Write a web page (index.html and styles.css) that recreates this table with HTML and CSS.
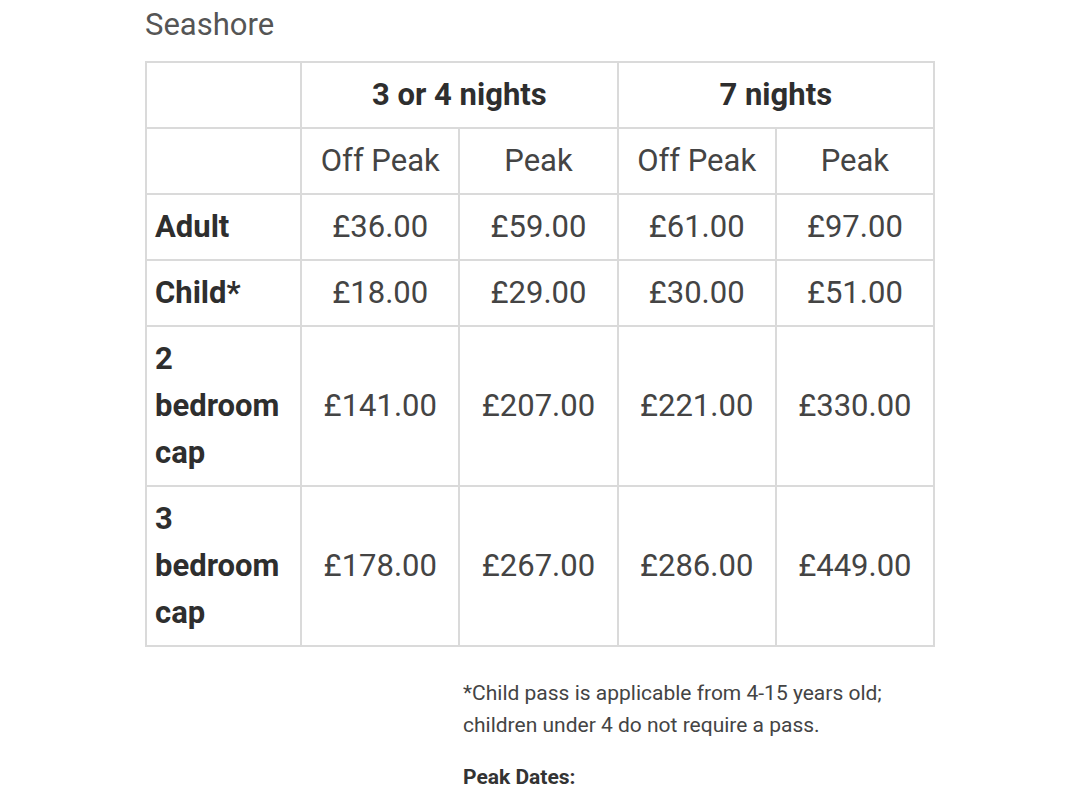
FILE: index.html
```html
<!DOCTYPE html>
<html lang="en">
<head>
<meta charset="utf-8">
<title>Seashore prices</title>
<link rel="stylesheet" href="styles.css">
</head>
<body>
<main class="page">
  <p class="title">Seashore</p>
  <table class="prices">
    <colgroup>
      <col class="col-label">
      <col class="col-val">
      <col class="col-val">
      <col class="col-val">
      <col class="col-val">
    </colgroup>
    <tr>
      <td></td>
      <th colspan="2">3 or 4 nights</th>
      <th colspan="2">7 nights</th>
    </tr>
    <tr>
      <td></td>
      <td>Off Peak</td>
      <td>Peak</td>
      <td>Off Peak</td>
      <td>Peak</td>
    </tr>
    <tr>
      <th class="label">Adult</th>
      <td>£36.00</td>
      <td>£59.00</td>
      <td>£61.00</td>
      <td>£97.00</td>
    </tr>
    <tr>
      <th class="label">Child*</th>
      <td>£18.00</td>
      <td>£29.00</td>
      <td>£30.00</td>
      <td>£51.00</td>
    </tr>
    <tr>
      <th class="label">2 bedroom cap</th>
      <td>£141.00</td>
      <td>£207.00</td>
      <td>£221.00</td>
      <td>£330.00</td>
    </tr>
    <tr>
      <th class="label">3 bedroom cap</th>
      <td>£178.00</td>
      <td>£267.00</td>
      <td>£286.00</td>
      <td>£449.00</td>
    </tr>
  </table>
  <div class="notes">
    <p class="note">*Child pass is applicable from 4-15 years old;<br>children under 4 do not require a pass.</p>
    <p class="note strong">Peak Dates:</p>
  </div>
</main>
</body>
</html>
```
FILE: styles.css
```css
html, body {
  margin: 0;
  padding: 0;
  background: #ffffff;
}
body {
  font-family: Roboto, "Liberation Sans", Arial, sans-serif;
  color: #3a3a3a;
}
.page {
  padding: 2px 0 0 145px;
}
.title {
  margin: 0 0 13px 0;
  font-size: 31px;
  line-height: 46px;
  color: #555555;
}
.prices {
  border-collapse: collapse;
  table-layout: fixed;
  width: 790px;
  font-size: 31px;
  line-height: 47px;
}
.col-label { width: 155px; }
.col-val { width: 158px; }
.prices td,
.prices th {
  border: 2px solid #dadada;
  padding: 8px 8px 9px 8px;
  text-align: center;
  vertical-align: middle;
  color: #444444;
  font-weight: 400;
}
.prices th {
  font-weight: 700;
  color: #2e2e2e;
}
.prices th.label {
  text-align: left;
}
.notes {
  margin: 30px 0 0 318px;
}
.note {
  margin: 0 0 20px 0;
  font-size: 21px;
  line-height: 32px;
  color: #444444;
}
.note.strong {
  font-weight: 700;
  color: #333333;
}
```
